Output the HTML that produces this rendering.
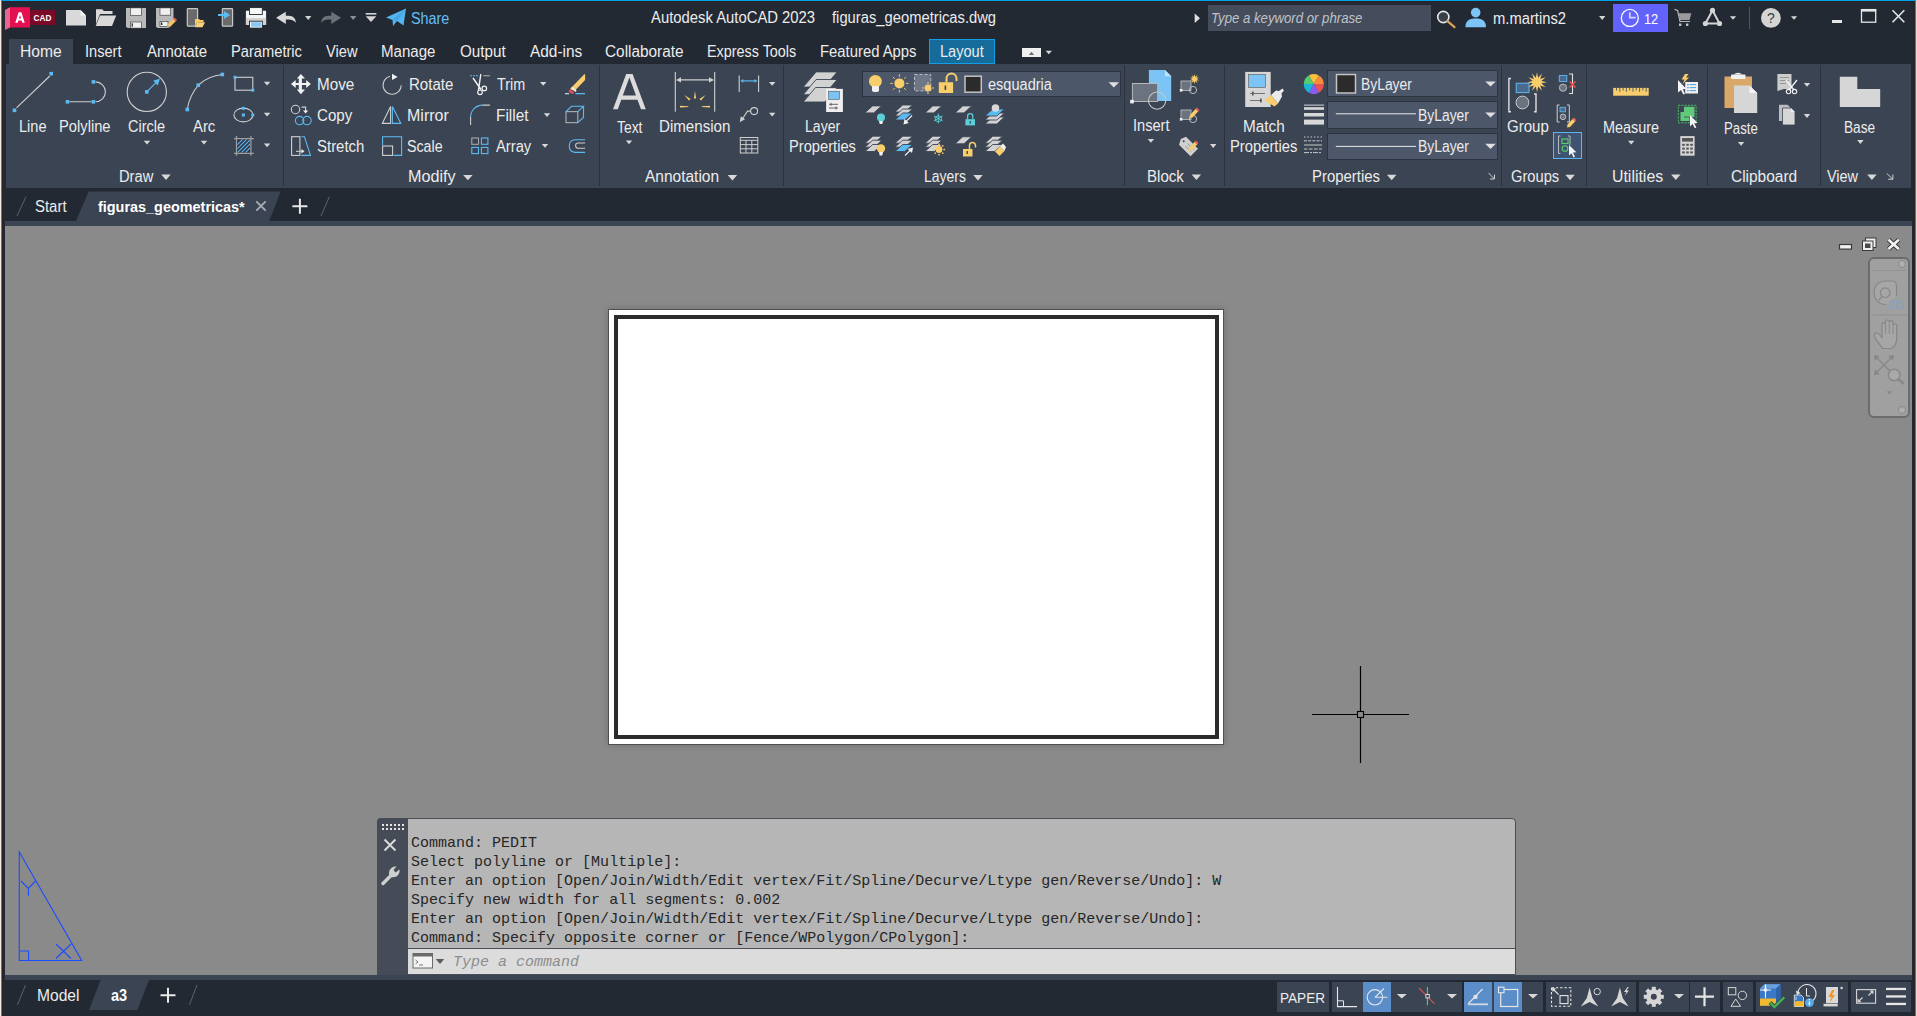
<!DOCTYPE html>
<html><head><meta charset="utf-8"><style>
html,body{margin:0;padding:0;}
body{width:1917px;height:1016px;overflow:hidden;position:relative;background:#222933;font-family:"Liberation Sans",sans-serif;}
body>div,body>svg,body>span{position:absolute;}
.t{white-space:pre;z-index:2;}
</style></head><body>
<div style="left:0px;top:0px;width:1px;height:1016px;background:#f6ece4;"></div>
<div style="left:1916px;top:0px;width:1px;height:1016px;background:#e2d6cf;"></div>
<div style="left:2px;top:1px;width:1px;height:1015px;background:#262429;"></div>
<div style="left:1914px;top:1px;width:1px;height:1015px;background:#262429;"></div>
<div style="left:2px;top:1px;width:1913px;height:1px;background:#262429;"></div>
<div style="left:1px;top:0px;width:1915px;height:1px;background:#00a2ea;"></div>
<div style="left:1px;top:0px;width:1px;height:1016px;background:#0098e0;"></div>
<div style="left:1915px;top:0px;width:1px;height:1016px;background:#0098e0;"></div>
<div style="left:9px;top:39px;width:64px;height:25px;background:#3b4453;"></div>
<div style="left:929px;top:39px;width:66px;height:25px;background:#156b99;box-sizing:border-box;border:1px solid #129ee6;"></div>
<span class="t" style="left:19.92px;top:44.10px;color:#ececec;font-size:16px;line-height:16px;font-family:'Liberation Sans';transform:scaleX(0.9780);transform-origin:0 0;">Home</span>
<span class="t" style="left:85.49px;top:44.10px;color:#ececec;font-size:16px;line-height:16px;font-family:'Liberation Sans';transform:scaleX(0.9128);transform-origin:0 0;">Insert</span>
<span class="t" style="left:146.50px;top:44.10px;color:#ececec;font-size:16px;line-height:16px;font-family:'Liberation Sans';transform:scaleX(0.9391);transform-origin:0 0;">Annotate</span>
<span class="t" style="left:231.08px;top:44.10px;color:#ececec;font-size:16px;line-height:16px;font-family:'Liberation Sans';transform:scaleX(0.9171);transform-origin:0 0;">Parametric</span>
<span class="t" style="left:326.00px;top:44.10px;color:#ececec;font-size:16px;line-height:16px;font-family:'Liberation Sans';transform:scaleX(0.9143);transform-origin:0 0;">View</span>
<span class="t" style="left:381.06px;top:44.10px;color:#ececec;font-size:16px;line-height:16px;font-family:'Liberation Sans';transform:scaleX(0.9421);transform-origin:0 0;">Manage</span>
<span class="t" style="left:460.00px;top:44.10px;color:#ececec;font-size:16px;line-height:16px;font-family:'Liberation Sans';transform:scaleX(0.9500);transform-origin:0 0;">Output</span>
<span class="t" style="left:530.00px;top:44.10px;color:#ececec;font-size:16px;line-height:16px;font-family:'Liberation Sans';transform:scaleX(0.9630);transform-origin:0 0;">Add-ins</span>
<span class="t" style="left:605.04px;top:44.10px;color:#ececec;font-size:16px;line-height:16px;font-family:'Liberation Sans';transform:scaleX(0.9605);transform-origin:0 0;">Collaborate</span>
<span class="t" style="left:707.10px;top:44.10px;color:#ececec;font-size:16px;line-height:16px;font-family:'Liberation Sans';transform:scaleX(0.8980);transform-origin:0 0;">Express Tools</span>
<span class="t" style="left:819.57px;top:44.10px;color:#ececec;font-size:16px;line-height:16px;font-family:'Liberation Sans';transform:scaleX(0.9272);transform-origin:0 0;">Featured Apps</span>
<span class="t" style="left:940.09px;top:44.10px;color:#ececec;font-size:16px;line-height:16px;font-family:'Liberation Sans';transform:scaleX(0.9106);transform-origin:0 0;">Layout</span>
<div style="left:6px;top:64px;width:1905px;height:124px;background:#3b4453;"></div>
<div style="left:283px;top:65px;width:1px;height:121px;background:#2c323d;"></div>
<div style="left:599px;top:65px;width:1px;height:121px;background:#2c323d;"></div>
<div style="left:783px;top:65px;width:1px;height:121px;background:#2c323d;"></div>
<div style="left:1124px;top:65px;width:1px;height:121px;background:#2c323d;"></div>
<div style="left:1224px;top:65px;width:1px;height:121px;background:#2c323d;"></div>
<div style="left:1501px;top:65px;width:1px;height:121px;background:#2c323d;"></div>
<div style="left:1586px;top:65px;width:1px;height:121px;background:#2c323d;"></div>
<div style="left:1707px;top:65px;width:1px;height:121px;background:#2c323d;"></div>
<div style="left:1820px;top:65px;width:1px;height:121px;background:#2c323d;"></div>
<div style="left:5px;top:221px;width:1907px;height:5px;background:#3b4453;"></div>
<svg style="left:70px;top:191px;" width="220" height="31" viewBox="0 0 220 31"><polygon points="6,30 18.7,0.5 210.7,0.5 199.2,30" fill="#3b4453"/></svg>
<span class="t" style="left:35.37px;top:199.00px;color:#ececec;font-size:16px;line-height:16px;font-family:'Liberation Sans';transform:scaleX(0.9333);transform-origin:0 0;">Start</span>
<span class="t" style="left:97.70px;top:199.00px;color:#ffffff;font-size:15.5px;line-height:15.5px;font-family:'Liberation Sans';font-weight:bold;transform:scaleX(0.9304);transform-origin:0 0;">figuras_geometricas*</span>
<div style="left:5px;top:226px;width:1907px;height:749px;background:#8a8a8a;"></div>
<div style="left:5px;top:975px;width:1907px;height:5px;background:#3b4453;"></div>
<svg style="left:85px;top:980px;" width="70" height="30" viewBox="0 0 70 30"><polygon points="4,30 15.6,0 64,0 52.3,30" fill="#3b4453"/></svg>
<span class="t" style="left:37.00px;top:987.80px;color:#ececec;font-size:15.6px;line-height:15.6px;font-family:'Liberation Sans';">Model</span>
<span class="t" style="left:111.20px;top:987.80px;color:#ffffff;font-size:15.6px;line-height:15.6px;font-family:'Liberation Sans';font-weight:bold;transform:scaleX(0.9294);transform-origin:0 0;">a3</span>
<div style="left:608px;top:309px;width:616px;height:436px;background:#ffffff;box-sizing:border-box;border:1px solid #505050;box-shadow:0 0 7px rgba(0,0,0,0.2);"></div>
<div style="left:614px;top:315px;width:605px;height:424px;background:transparent;box-sizing:border-box;border:4px solid #2b2b2b;"></div>
<span class="t" style="left:650.90px;top:9.90px;color:#ececec;font-size:15.8px;line-height:15.8px;font-family:'Liberation Sans';transform:scaleX(0.9391);transform-origin:0 0;">Autodesk AutoCAD 2023</span>
<span class="t" style="left:831.50px;top:9.90px;color:#ececec;font-size:15.8px;line-height:15.8px;font-family:'Liberation Sans';transform:scaleX(0.9343);transform-origin:0 0;">figuras_geometricas.dwg</span>
<span class="t" style="left:18.79px;top:119.00px;color:#ececec;font-size:16px;line-height:16px;font-family:'Liberation Sans';transform:scaleX(0.9103);transform-origin:0 0;">Line</span>
<span class="t" style="left:59.28px;top:119.00px;color:#ececec;font-size:16px;line-height:16px;font-family:'Liberation Sans';transform:scaleX(0.9200);transform-origin:0 0;">Polyline</span>
<span class="t" style="left:128.39px;top:119.00px;color:#ececec;font-size:16px;line-height:16px;font-family:'Liberation Sans';transform:scaleX(0.9075);transform-origin:0 0;">Circle</span>
<span class="t" style="left:193.00px;top:119.00px;color:#ececec;font-size:16px;line-height:16px;font-family:'Liberation Sans';transform:scaleX(0.9292);transform-origin:0 0;">Arc</span>
<span class="t" style="left:119.08px;top:169.00px;color:#ececec;font-size:16px;line-height:16px;font-family:'Liberation Sans';transform:scaleX(0.9189);transform-origin:0 0;">Draw</span>
<span class="t" style="left:316.95px;top:77.00px;color:#ececec;font-size:16px;line-height:16px;font-family:'Liberation Sans';transform:scaleX(0.9526);transform-origin:0 0;">Move</span>
<span class="t" style="left:408.56px;top:77.00px;color:#ececec;font-size:16px;line-height:16px;font-family:'Liberation Sans';transform:scaleX(0.9391);transform-origin:0 0;">Rotate</span>
<span class="t" style="left:496.60px;top:77.00px;color:#ececec;font-size:16px;line-height:16px;font-family:'Liberation Sans';transform:scaleX(0.8968);transform-origin:0 0;">Trim</span>
<span class="t" style="left:317.26px;top:108.10px;color:#ececec;font-size:16px;line-height:16px;font-family:'Liberation Sans';transform:scaleX(0.9444);transform-origin:0 0;">Copy</span>
<span class="t" style="left:407.00px;top:108.10px;color:#ececec;font-size:16px;line-height:16px;font-family:'Liberation Sans';">Mirror</span>
<span class="t" style="left:496.04px;top:108.10px;color:#ececec;font-size:16px;line-height:16px;font-family:'Liberation Sans';transform:scaleX(0.9606);transform-origin:0 0;">Fillet</span>
<span class="t" style="left:317.37px;top:139.00px;color:#ececec;font-size:16px;line-height:16px;font-family:'Liberation Sans';transform:scaleX(0.9347);transform-origin:0 0;">Stretch</span>
<span class="t" style="left:407.11px;top:139.00px;color:#ececec;font-size:16px;line-height:16px;font-family:'Liberation Sans';transform:scaleX(0.8897);transform-origin:0 0;">Scale</span>
<span class="t" style="left:496.00px;top:139.00px;color:#ececec;font-size:16px;line-height:16px;font-family:'Liberation Sans';transform:scaleX(0.9211);transform-origin:0 0;">Array</span>
<span class="t" style="left:408.49px;top:169.00px;color:#ececec;font-size:16px;line-height:16px;font-family:'Liberation Sans';transform:scaleX(1.0109);transform-origin:0 0;">Modify</span>
<span class="t" style="left:617.10px;top:119.60px;color:#ececec;font-size:16px;line-height:16px;font-family:'Liberation Sans';transform:scaleX(0.8667);transform-origin:0 0;">Text</span>
<span class="t" style="left:658.86px;top:119.20px;color:#ececec;font-size:16px;line-height:16px;font-family:'Liberation Sans';transform:scaleX(0.9446);transform-origin:0 0;">Dimension</span>
<span class="t" style="left:645.00px;top:169.00px;color:#ececec;font-size:16px;line-height:16px;font-family:'Liberation Sans';transform:scaleX(0.9684);transform-origin:0 0;">Annotation</span>
<span class="t" style="left:804.92px;top:118.90px;color:#ececec;font-size:16px;line-height:16px;font-family:'Liberation Sans';transform:scaleX(0.8821);transform-origin:0 0;">Layer</span>
<span class="t" style="left:789.08px;top:139.10px;color:#ececec;font-size:16px;line-height:16px;font-family:'Liberation Sans';transform:scaleX(0.9181);transform-origin:0 0;">Properties</span>
<span class="t" style="left:988.10px;top:76.90px;color:#ececec;font-size:15.8px;line-height:15.8px;font-family:'Liberation Sans';transform:scaleX(0.9214);transform-origin:0 0;">esquadria</span>
<span class="t" style="left:924.13px;top:169.00px;color:#ececec;font-size:16px;line-height:16px;font-family:'Liberation Sans';transform:scaleX(0.8723);transform-origin:0 0;">Layers</span>
<span class="t" style="left:1132.79px;top:118.20px;color:#ececec;font-size:16px;line-height:16px;font-family:'Liberation Sans';transform:scaleX(0.9128);transform-origin:0 0;">Insert</span>
<span class="t" style="left:1146.56px;top:169.00px;color:#ececec;font-size:16px;line-height:16px;font-family:'Liberation Sans';transform:scaleX(0.9421);transform-origin:0 0;">Block</span>
<span class="t" style="left:1242.74px;top:118.90px;color:#ececec;font-size:16px;line-height:16px;font-family:'Liberation Sans';transform:scaleX(0.9571);transform-origin:0 0;">Match</span>
<span class="t" style="left:1229.98px;top:139.20px;color:#ececec;font-size:16px;line-height:16px;font-family:'Liberation Sans';transform:scaleX(0.9236);transform-origin:0 0;">Properties</span>
<span class="t" style="left:1361.01px;top:76.90px;color:#ececec;font-size:15.6px;line-height:15.6px;font-family:'Liberation Sans';transform:scaleX(0.8893);transform-origin:0 0;">ByLayer</span>
<span class="t" style="left:1418.01px;top:108.10px;color:#ececec;font-size:15.6px;line-height:15.6px;font-family:'Liberation Sans';transform:scaleX(0.8911);transform-origin:0 0;">ByLayer</span>
<span class="t" style="left:1418.01px;top:139.00px;color:#ececec;font-size:15.6px;line-height:15.6px;font-family:'Liberation Sans';transform:scaleX(0.8911);transform-origin:0 0;">ByLayer</span>
<span class="t" style="left:1312.37px;top:169.00px;color:#ececec;font-size:16px;line-height:16px;font-family:'Liberation Sans';transform:scaleX(0.9319);transform-origin:0 0;">Properties</span>
<span class="t" style="left:1506.56px;top:118.90px;color:#ececec;font-size:16px;line-height:16px;font-family:'Liberation Sans';transform:scaleX(0.9395);transform-origin:0 0;">Group</span>
<span class="t" style="left:1510.88px;top:169.00px;color:#ececec;font-size:16px;line-height:16px;font-family:'Liberation Sans';transform:scaleX(0.9176);transform-origin:0 0;">Groups</span>
<span class="t" style="left:1602.80px;top:119.70px;color:#ececec;font-size:16px;line-height:16px;font-family:'Liberation Sans';transform:scaleX(0.9016);transform-origin:0 0;">Measure</span>
<span class="t" style="left:1612.41px;top:169.00px;color:#ececec;font-size:16px;line-height:16px;font-family:'Liberation Sans';transform:scaleX(0.9920);transform-origin:0 0;">Utilities</span>
<span class="t" style="left:1724.08px;top:120.70px;color:#ececec;font-size:16px;line-height:16px;font-family:'Liberation Sans';transform:scaleX(0.8250);transform-origin:0 0;">Paste</span>
<span class="t" style="left:1730.53px;top:169.00px;color:#ececec;font-size:16px;line-height:16px;font-family:'Liberation Sans';transform:scaleX(0.9657);transform-origin:0 0;">Clipboard</span>
<span class="t" style="left:1843.95px;top:119.80px;color:#ececec;font-size:16px;line-height:16px;font-family:'Liberation Sans';transform:scaleX(0.8543);transform-origin:0 0;">Base</span>
<span class="t" style="left:1827.00px;top:169.00px;color:#ececec;font-size:16px;line-height:16px;font-family:'Liberation Sans';transform:scaleX(0.9029);transform-origin:0 0;">View</span>
<span class="t" style="left:411.10px;top:11.00px;color:#66bff5;font-size:16px;line-height:16px;font-family:'Liberation Sans';transform:scaleX(0.8976);transform-origin:0 0;">Share</span>
<div style="left:1208px;top:5px;width:223px;height:26px;background:#454d5c;"></div>
<span class="t" style="left:1210.97px;top:10.90px;color:#bfc3c9;font-size:14.2px;line-height:14.2px;font-family:'Liberation Sans';font-style:italic;transform:scaleX(0.9290);transform-origin:0 0;">Type a keyword or phrase</span>
<span class="t" style="left:1492.86px;top:11.00px;color:#ececec;font-size:15.8px;line-height:15.8px;font-family:'Liberation Sans';transform:scaleX(0.9351);transform-origin:0 0;">m.martins2</span>
<div style="left:1613px;top:4px;width:55px;height:28px;background:#6262fd;"></div>
<span class="t" style="left:1643.90px;top:11.90px;color:#ffffff;font-size:14.2px;line-height:14.2px;font-family:'Liberation Sans';transform:scaleX(0.9000);transform-origin:0 0;">12</span>
<div style="left:1749px;top:7px;width:1px;height:22px;background:#4a5566;"></div>
<div style="left:1832px;top:20px;width:10px;height:3px;background:#e6e6e6;"></div>
<div style="left:861.5px;top:70.6px;width:259px;height:26.5px;background:#4d576a;box-sizing:border-box;border:1px solid #2d3340;"></div>
<div style="left:1327.3px;top:70px;width:170.3px;height:27.3px;background:#4d576a;box-sizing:border-box;border:1px solid #2d3340;"></div>
<div style="left:1327.3px;top:101.3px;width:170.3px;height:27.3px;background:#4d576a;box-sizing:border-box;border:1px solid #2d3340;"></div>
<div style="left:1327.3px;top:132.6px;width:170.3px;height:27.3px;background:#4d576a;box-sizing:border-box;border:1px solid #2d3340;"></div>
<div style="left:1553px;top:131.9px;width:29px;height:26.7px;background:#3f5470;box-sizing:border-box;border:1.3px solid #5cb6f2;"></div>
<div style="left:1022px;top:48px;width:19px;height:9px;background:#f0f0f0;"></div>
<div style="left:1868px;top:257px;width:41.5px;height:161.2px;background:#a0a0a0;box-sizing:border-box;border:2px solid #6c6c6c;border-radius:6px;"></div>
<div style="left:377px;top:818px;width:1139px;height:157px;background:#b6b6b6;box-sizing:border-box;border:1px solid #4a4f57;border-radius:4px 4px 0 0;"></div>
<div style="left:377px;top:818px;width:31px;height:157px;background:#464c57;border-radius:4px 0 0 0;"></div>
<div style="left:408px;top:948px;width:1107px;height:1px;background:#4a4f57;"></div>
<div style="left:408px;top:949px;width:1107px;height:25px;background:#dcdcdc;"></div>
<span class="t" style="left:411.10px;top:836.00px;color:#262626;font-size:15px;line-height:15px;font-family:'Liberation Mono';">Command: PEDIT</span>
<span class="t" style="left:411.10px;top:855.00px;color:#262626;font-size:15px;line-height:15px;font-family:'Liberation Mono';">Select polyline or [Multiple]:</span>
<span class="t" style="left:411.10px;top:874.00px;color:#262626;font-size:15px;line-height:15px;font-family:'Liberation Mono';">Enter an option [Open/Join/Width/Edit vertex/Fit/Spline/Decurve/Ltype gen/Reverse/Undo]: W</span>
<span class="t" style="left:411.10px;top:893.00px;color:#262626;font-size:15px;line-height:15px;font-family:'Liberation Mono';">Specify new width for all segments: 0.002</span>
<span class="t" style="left:411.10px;top:912.00px;color:#262626;font-size:15px;line-height:15px;font-family:'Liberation Mono';">Enter an option [Open/Join/Width/Edit vertex/Fit/Spline/Decurve/Ltype gen/Reverse/Undo]:</span>
<span class="t" style="left:411.10px;top:931.00px;color:#262626;font-size:15px;line-height:15px;font-family:'Liberation Mono';">Command: Specify opposite corner or [Fence/WPolygon/CPolygon]:</span>
<span class="t" style="left:453.00px;top:955.00px;color:#8c8c8c;font-size:15px;line-height:15px;font-family:'Liberation Mono';font-style:italic;">Type a command</span>
<div style="left:1277px;top:982px;width:52px;height:29.6px;background:#3b4453;"></div>
<span class="t" style="left:1280.32px;top:989.70px;color:#ececec;font-size:15.5px;line-height:15.5px;font-family:'Liberation Sans';transform:scaleX(0.8760);transform-origin:0 0;">PAPER</span>
<div style="left:1332px;top:982px;width:130px;height:29.6px;background:#3b4453;"></div>
<div style="left:1363px;top:982px;width:28px;height:29.6px;background:#5b8ec9;"></div>
<div style="left:1464px;top:982px;width:79px;height:29.6px;background:#3b4453;"></div>
<div style="left:1463.6px;top:982px;width:28.1px;height:29.6px;background:#5b8ec9;"></div>
<div style="left:1493.7px;top:982px;width:28.1px;height:29.6px;background:#5b8ec9;"></div>
<div style="left:1546px;top:982px;width:90px;height:29.6px;background:#3b4453;"></div>
<div style="left:1639px;top:982px;width:50px;height:29.6px;background:#3b4453;"></div>
<div style="left:1690px;top:982px;width:30px;height:29.6px;background:#3b4453;"></div>
<div style="left:1723px;top:982px;width:30px;height:29.6px;background:#3b4453;"></div>
<div style="left:1756px;top:982px;width:92px;height:29.6px;background:#3b4453;"></div>
<div style="left:1851px;top:982px;width:60px;height:29.6px;background:#3b4453;"></div>
<svg style="left:0;top:0" width="1917" height="1016" viewBox="0 0 1917 1016"><polygon points="5,10 10,7.2 10,27.5 5,30" fill="#e9658e"/>
<rect x="10" y="7.2" width="20" height="20.3" fill="#e5104f"/>
<rect x="30" y="9.9" width="25" height="15.1" fill="#7b0a29"/>
<path d="M15.3,22.8 L18.6,12.2 H21.4 L24.7,22.8 H22.3 L21.6,20.5 H18.4 L17.7,22.8 Z M19,18.6 H21 L20,15 Z" fill="#fff"/>
<text x="33.6" y="20.9" font-family="Liberation Sans" font-weight="bold" font-size="9.6" fill="#fff" textLength="17.8" lengthAdjust="spacingAndGlyphs">CAD</text>
<path d="M66,10 H80.5 L86,15.5 V25.4 H66 Z" fill="#d9d9d9"/><path d="M80.5,10 V15.5 H86 Z" fill="#f4f4f4"/>
<path d="M96,9.2 H102 L104,11 H112.5 V14 H100 L96,24 Z" fill="#d9d9d9"/><path d="M100,15.4 H116.2 L112,26 H95.7 Z" fill="#d9d9d9"/>
<path d="M126,7.9 H146 V28.1 H127.5 L126,26.6 Z" fill="#b9b9b9"/><rect x="130.3" y="7.9" width="11" height="7.7" fill="#f0f0f0" stroke="#333" stroke-width="0.6"/><rect x="130.3" y="22" width="11" height="6.1" fill="#f0f0f0" stroke="#333" stroke-width="0.6"/><rect x="131.6" y="23.2" width="1.3" height="3.5" fill="#333"/>
<path d="M156,7.9 H173.5 V20 L167,28 H157.5 L156,26.6 Z" fill="#b9b9b9"/><rect x="160" y="7.9" width="10.7" height="7.3" fill="#f0f0f0" stroke="#333" stroke-width="0.6"/><rect x="160" y="21.5" width="8" height="5" fill="#f0f0f0" stroke="#333" stroke-width="0.6"/><rect x="161" y="22.5" width="1.3" height="2.5" fill="#222"/>
<path d="M166.5,28 L167.5,24.5 L174,18 L176.5,20.5 L170,27 Z" fill="#f2c462"/><path d="M173,19 L174.5,17.5 L177,20 L175.5,21.5 Z" fill="#e85a5a"/><path d="M166.5,28 L167.5,24.5 L170,27 Z" fill="#aaa"/>
<rect x="187.3" y="8.6" width="10.3" height="17.6" rx="0.8" fill="#6a6a6a" stroke="#c8c8c8" stroke-width="1.2"/><path d="M195,19 H199 L200,20 H203.5 V22 H197.5 L195,26.5 Z" fill="#f5c966"/><path d="M197.6,22.2 H205 L202.5,27.2 H195 Z" fill="#f7d27a"/>
<rect x="222.3" y="8.6" width="10.3" height="17.6" rx="0.8" fill="#6a6a6a" stroke="#c8c8c8" stroke-width="1.2"/><path d="M218,14 H224 V10.9 L230.2,15 L224,19 V16 H218 Z" fill="#5bbcf5"/>
<rect x="245.9" y="10.7" width="20.2" height="14.1" fill="#f4f4f4"/><rect x="245.9" y="18.1" width="20.2" height="6.7" fill="#d2d2d2"/><rect x="249.5" y="7.6" width="12.8" height="6.9" fill="#f8f8f8" stroke="#222933" stroke-width="0.9"/><rect x="249.5" y="21.2" width="12.8" height="6.9" fill="#f8f8f8" stroke="#222933" stroke-width="0.9"/><rect x="251.1" y="22.2" width="9.8" height="4.5" fill="#86c8f7"/>
<path d="M276.1,17.8 L285.8,11.8 V15.7 H288.5 C293,15.7 296,18.5 295.8,22.8 C294,20.5 291.5,19.6 288.5,19.6 H285.8 V24 Z" fill="#d8d8d8"/>
<path d="M305,16 H311.4 L308.2,20 Z" fill="#d4d4d4"/>
<path d="M341,17.8 L331.3,11.8 V15.7 H328.6 C324.1,15.7 321.1,18.5 321.3,22.8 C323.1,20.5 325.6,19.6 328.6,19.6 H331.3 V24 Z" fill="#6b7079"/>
<path d="M350,16 H356.4 L353.2,20 Z" fill="#8a8e95"/>
<rect x="365.7" y="13" width="10.7" height="1.6" fill="#d4d4d4"/><path d="M365.7,16.2 H376.4 L371,22 Z" fill="#d4d4d4"/>
<path d="M386,17.5 L406,8.6 L403.5,25.5 L397,21 L393,26 L392.5,20 Z" fill="#54b4ef"/><path d="M392.5,20 L406,8.6 L397,21 Z" fill="#48a4e0"/>
<path d="M1194.7,13.4 L1200,18.2 L1194.7,23 Z" fill="#e0e0e0"/>
<circle cx="1443.3" cy="17" r="5.6" fill="#3a3f48" stroke="#e6e6e6" stroke-width="1.6"/><path d="M1447.5,21.2 L1454.5,27.2" stroke="#d9a55a" stroke-width="2.2" stroke-linecap="round"/>
<circle cx="1475.7" cy="12.6" r="4.8" fill="#7cc4f5"/><path d="M1465.4,27.2 C1465.4,21 1469,18.6 1475.7,18.6 C1482.4,18.6 1486,21 1486,27.2 Z" fill="#7cc4f5"/>
<path d="M1599,16 H1605.4 L1602.2,20 Z" fill="#d4d4d4"/>
<circle cx="1629.8" cy="17.9" r="8.5" fill="none" stroke="#f4f4ff" stroke-width="1.4"/><path d="M1629.8,12.2 V17.6 H1635.8" fill="none" stroke="#d4d4fb" stroke-width="1.8"/>
<path d="M1674.6,9.4 L1677.6,10.5 L1680,21.5 H1690" fill="none" stroke="#b8b8b8" stroke-width="1.2"/><path d="M1678.5,13.3 H1691.3 L1689.6,20 H1680 Z" fill="#9a9a9a"/><rect x="1679" y="23.5" width="2.4" height="2.4" fill="#c8c8c8"/><rect x="1686" y="23.5" width="2.4" height="2.4" fill="#c8c8c8"/>
<path d="M1712.5,10.4 L1705.4,23.5 H1719.5 Z" fill="none" stroke="#d4d4d4" stroke-width="2"/><circle cx="1712.5" cy="10.4" r="2.6" fill="#d4d4d4"/><circle cx="1705.4" cy="23.5" r="2.6" fill="#d4d4d4"/><circle cx="1719.5" cy="23.5" r="2.6" fill="#d4d4d4"/>
<path d="M1729.9,16.2 H1736.2 L1733,19.8 Z" fill="#d4d4d4"/>
<circle cx="1770.9" cy="17.9" r="9.9" fill="#d4d4d4"/><text x="1767" y="23" font-family="Liberation Sans" font-size="14" fill="#3c3c3c">?</text>
<path d="M1790.9,16.2 H1797.2 L1794,19.8 Z" fill="#d4d4d4"/>
<rect x="1861.5" y="9.6" width="14.2" height="12.6" fill="none" stroke="#e6e6e6" stroke-width="1.3"/><rect x="1861" y="9" width="15.2" height="2.6" fill="#e6e6e6"/>
<path d="M1892.5,10.3 L1904.3,22.3 M1904.3,10.3 L1892.5,22.3" stroke="#e6e6e6" stroke-width="1.6"/>
<path d="M16.5,107.8 L49.8,76" stroke="#cfcfcf" stroke-width="1.1"/><rect x="12.70" y="108.50" width="3.6" height="3.6" fill="#5cbaf2"/><rect x="49.40" y="71.90" width="3.6" height="3.6" fill="#5cbaf2"/>
<path d="M69.5,101.8 H91.5 M95.5,81.9 A9.9,9.9 0 0 1 95.5,101.7" fill="none" stroke="#cfcfcf" stroke-width="1.1"/><rect x="65.70" y="100.00" width="3.6" height="3.6" fill="#5cbaf2"/><rect x="91.60" y="100.00" width="3.6" height="3.6" fill="#5cbaf2"/><rect x="91.60" y="80.10" width="3.6" height="3.6" fill="#5cbaf2"/>
<circle cx="146.8" cy="91.9" r="19.6" fill="none" stroke="#cfcfcf" stroke-width="1.1"/><path d="M146.8,91.9 L157.5,81.2" stroke="#5cbaf2" stroke-width="1.2"/><path d="M160,78.6 L153.2,80.8 L157.8,85.4 Z" fill="#5cbaf2"/><rect x="145.00" y="90.10" width="3.6" height="3.6" fill="#5cbaf2"/>
<path d="M143.80,140.70 H150.20 L147.00,144.50 Z" fill="#d8d8d8"/>
<path d="M187.3,109.5 C189,97 195,89 199,84.5 C205,79 213,75.5 222.3,74.5" fill="none" stroke="#cfcfcf" stroke-width="1.1"/><rect x="185.50" y="107.70" width="3.6" height="3.6" fill="#5cbaf2"/><rect x="196.40" y="83.40" width="3.6" height="3.6" fill="#5cbaf2"/><rect x="220.50" y="72.70" width="3.6" height="3.6" fill="#5cbaf2"/>
<path d="M200.80,140.70 H207.20 L204.00,144.50 Z" fill="#d8d8d8"/>
<rect x="235" y="77.3" width="17.8" height="12.9" fill="none" stroke="#cfcfcf" stroke-width="1.1"/><rect x="233.50" y="75.80" width="3" height="3" fill="#5cbaf2"/><rect x="251.30" y="88.70" width="3" height="3" fill="#5cbaf2"/>
<path d="M263.90,81.70 H270.30 L267.10,85.50 Z" fill="#d8d8d8"/>
<ellipse cx="243.4" cy="115" rx="9.5" ry="6.9" fill="none" stroke="#cfcfcf" stroke-width="1.1"/><rect x="241.90" y="113.50" width="3" height="3" fill="#5cbaf2"/><rect x="241.90" y="106.80" width="3" height="3" fill="#5cbaf2"/><rect x="251.30" y="113.50" width="3" height="3" fill="#5cbaf2"/>
<path d="M263.90,112.70 H270.30 L267.10,116.50 Z" fill="#d8d8d8"/>
<rect x="236.5" y="138.6" width="14.4" height="14.8" fill="#30374a"/><defs><clipPath id="hc"><rect x="237.3" y="139.4" width="12.8" height="13.2"/></clipPath></defs><g clip-path="url(#hc)" stroke="#5cbaf2" stroke-width="1.1"><path d="M230,160 L252,138 M234,160 L256,138 M238,160 L260,138 M226,160 L248,138 M222,160 L244,138"/></g><path d="M236.5,136.1 V155.7 M250.9,136.1 V155.7 M234.1,138.6 H253.8 M234.1,153.4 H253.8" stroke="#a0a0a0" stroke-width="1.2"/>
<path d="M263.90,143.50 H270.30 L267.10,147.30 Z" fill="#d8d8d8"/>
<path d="M161.25,174.60 H170.75 L166.00,180.00 Z" fill="#d8d8d8"/>
<path d="M299.9,78 V90 M295,84 H307" stroke="#f2f2f2" stroke-width="2.2"/><path d="M300.9,73.9 L296.8,78.6 H305 Z M300.9,94.3 L296.8,89.6 H305 Z M291,84 L295.7,79.9 V88.1 Z M310.9,84 L306.2,79.9 V88.1 Z" fill="#f2f2f2"/><path d="M300.9,78 V90 M295,84 H307" stroke="#f2f2f2" stroke-width="2"/>
<path d="M390,76.3 A9.1,9.1 0 1 0 401.2,85.2" fill="none" stroke="#cfcfcf" stroke-width="1.1"/><path d="M392,73.8 L397.6,77 L392,80 Z" fill="#f2f2f2"/>
<circle cx="295.5" cy="109.5" r="4.2" fill="none" stroke="#cfcfcf" stroke-width="1.1"/><path d="M301.5,107.2 H305.6 V111" fill="none" stroke="#cfcfcf" stroke-width="1.2"/><path d="M303,110.5 H308.2 L305.6,113.5 Z" fill="#f2f2f2"/><circle cx="299.6" cy="120.6" r="4.2" fill="none" stroke="#5cbaf2" stroke-width="1.1"/><circle cx="307" cy="120.6" r="4.2" fill="none" stroke="#5cbaf2" stroke-width="1.1"/>
<path d="M382.3,123.4 L390.6,106.6 V123.4 Z" fill="none" stroke="#cfcfcf" stroke-width="1.1"/><path d="M392.4,106.6 V123.4 H400.8 Z" fill="none" stroke="#5cbaf2" stroke-width="1.1"/>
<rect x="291.6" y="136.7" width="8.3" height="18.7" fill="none" stroke="#cfcfcf" stroke-width="1.1"/><path d="M301.3,136.7 H304.4 L310.5,155.4 H301.3" fill="none" stroke="#5cbaf2" stroke-width="1.1"/><path d="M296,151.3 H302" stroke="#cfcfcf" stroke-width="1.1"/><path d="M301.5,149 L304.5,151.3 L301.5,153.6 Z" fill="#f2f2f2"/>
<path d="M382.6,145 V136.7 H401.6 V155.4 H393.5" fill="none" stroke="#5cbaf2" stroke-width="1.1"/><rect x="382.6" y="146" width="10" height="9.4" fill="none" stroke="#cfcfcf" stroke-width="1.1"/>
<path d="M470,75.7 H478.7" stroke="#5cbaf2" stroke-width="1.1" stroke-dasharray="2,1"/><path d="M483.3,75.7 H489.9" stroke="#a8a8a8" stroke-width="1.1"/><path d="M473,78 L481,89.5 M480.8,74.2 L478.5,90" stroke="#f2f2f2" stroke-width="1.4"/><circle cx="480" cy="92.3" r="2.3" fill="none" stroke="#f2f2f2" stroke-width="1.2"/><circle cx="484.3" cy="88.4" r="2.3" fill="none" stroke="#f2f2f2" stroke-width="1.2"/>
<path d="M540.00,81.90 H546.40 L543.20,85.70 Z" fill="#d8d8d8"/>
<path d="M570,89 L584,74.5 L585.1,73.9 V80 L574.5,91 Z" fill="#f8cd6c"/><path d="M570,89 L574.5,93 L572,94 L568.5,91.5 Z" fill="#ea4f5a"/><path d="M571,88 L575.5,92 L576.7,90.8 L572.2,86.8 Z" fill="#f0f0f0"/><path d="M565,93.6 H569 M575.5,93.6 H585" stroke="#5cbaf2" stroke-width="1.1"/><path d="M565,93.6 H569" stroke="#cfcfcf" stroke-width="1.1"/>
<path d="M470.6,117 A12,12 0 0 1 482.4,105.1" fill="none" stroke="#5cbaf2" stroke-width="1.1"/><path d="M482.4,105.1 H489.9 M470.6,117 V125" stroke="#cfcfcf" stroke-width="1.1"/>
<path d="M543.80,113.20 H550.20 L547.00,117.00 Z" fill="#d8d8d8"/>
<rect x="566" y="111.6" width="11.8" height="11" fill="none" stroke="#a8a8a8" stroke-width="1.2"/><path d="M566,111.6 L571.5,106.3 H583.5 L577.8,111.6 M583.5,106.3 V117.5 L577.8,122.6" fill="none" stroke="#5cbaf2" stroke-width="1.1"/>
<rect x="471.8" y="138" width="6.7" height="6.3" fill="none" stroke="#a8a8a8" stroke-width="1.1"/><rect x="481.4" y="138" width="6.5" height="6.3" fill="none" stroke="#5cbaf2" stroke-width="1.1"/><rect x="471.8" y="147.4" width="6.7" height="6.2" fill="none" stroke="#5cbaf2" stroke-width="1.1"/><rect x="481.4" y="147.4" width="6.5" height="6.2" fill="none" stroke="#5cbaf2" stroke-width="1.1"/>
<path d="M541.80,144.00 H548.20 L545.00,147.80 Z" fill="#d8d8d8"/>
<path d="M585.1,139.8 H574.5 A6.4,6.4 0 0 0 574.5,152.4 H585.1" fill="none" stroke="#5cbaf2" stroke-width="1.1"/><path d="M585.1,143 H577.5 A2.7,2.7 0 0 0 577.5,148.2 H585.1" fill="none" stroke="#cfcfcf" stroke-width="1.1"/>
<path d="M463.15,174.90 H472.65 L467.90,180.30 Z" fill="#d8d8d8"/>
<path d="M613,109.3 L626.2,73.9 H632.6 L645.8,109.3 H641 L637.5,99.7 H621.3 L617.8,109.3 Z M622.8,95.5 H636 L629.4,77.5 Z" fill="#dcdcdc"/>
<path d="M625.80,140.40 H632.20 L629.00,144.20 Z" fill="#d8d8d8"/>
<path d="M675.3,72 V111.8 M714.7,72 V111.8 M679,79.9 H711" stroke="#cfcfcf" stroke-width="1.1"/><path d="M676,79.9 L681,77.2 V82.6 Z M714,79.9 L709,77.2 V82.6 Z" fill="#cfcfcf"/>
<g fill="#f8cd6c"><path d="M693.9,98.6 L695,91 L696.1,98.6 Z"/><path d="M688.9,100.6 L684.4,95 L690.6,99 Z"/><path d="M701.1,100.6 L705.6,95 L699.4,99 Z"/><path d="M688.3,106.3 L680,105.8 V107.4 L688.3,107 Z"/><path d="M701.7,106.3 L710,105.8 V107.4 L701.7,107 Z"/></g>
<path d="M739.2,75.4 V92 M758.6,75.4 V92" stroke="#cfcfcf" stroke-width="1.1"/><path d="M742,80.9 H756" stroke="#5cbaf2" stroke-width="1.2"/><path d="M740.3,80.9 L743.3,79 V82.8 Z M757.5,80.9 L754.5,79 V82.8 Z" fill="#5cbaf2"/>
<path d="M769.00,81.90 H775.40 L772.20,85.70 Z" fill="#d8d8d8"/>
<circle cx="754.1" cy="111.1" r="3.5" fill="none" stroke="#cfcfcf" stroke-width="1.1"/><path d="M750.6,111.1 H747.5 L742,119.5" fill="none" stroke="#cfcfcf" stroke-width="1.1"/><path d="M739.7,122.3 L740.8,116.2 L745,119.3 Z" fill="#cfcfcf"/>
<path d="M769.00,112.70 H775.40 L772.20,116.50 Z" fill="#d8d8d8"/>
<rect x="740.3" y="137.5" width="17.5" height="15.5" fill="none" stroke="#cfcfcf" stroke-width="1"/><path d="M740.3,140.3 H757.8 M740.3,144.6 H757.8 M740.3,148.8 H757.8 M746,140.3 V153 M751.8,140.3 V153" stroke="#cfcfcf" stroke-width="1"/>
<path d="M727.65,175.10 H737.15 L732.40,180.50 Z" fill="#d8d8d8"/>
<path d="M803.20,87.10 L816.12,71.90 H837.20 L824.28,87.10 Z" fill="#d2d2d2" stroke="#3b4453" stroke-width="0.9"/><path d="M803.20,94.70 L816.12,79.50 H837.20 L824.28,94.70 Z" fill="#d2d2d2" stroke="#3b4453" stroke-width="0.9"/><path d="M803.20,102.00 L815.53,87.50 H837.20 L824.88,102.00 Z" fill="#d2d2d2" stroke="#3b4453" stroke-width="0.9"/>
<rect x="826.1" y="88.9" width="16.8" height="23.1" fill="#efefef"/><rect x="828.4" y="91.2" width="11.2" height="8.3" fill="#7cc4f5" stroke="#444" stroke-width="0.5"/><path d="M829,104.3 H838 M829,108 H838" stroke="#555" stroke-width="0.9"/><path d="M831,102.8 V105.8 M836,106.5 V109.5" stroke="#555" stroke-width="0.9"/>
<circle cx="875.4" cy="81.3" r="6.4" fill="#f8cd6c"/><path d="M872,86 H879 V90.5 C879,92.5 872,92.5 872,90.5 Z" fill="#f0f0f0"/>
<circle cx="899.4" cy="83.4" r="5" fill="#f8cd6c"/><g stroke="#f8cd6c" stroke-width="1"><path d="M899.4,74.3 V76.8 M899.4,90 V92.5 M890.3,83.4 H892.8 M906,83.4 H908.5 M893,77 L894.7,78.7 M904.1,88.1 L905.8,89.8 M905.8,77 L904.1,78.7 M894.7,88.1 L893,89.8"/></g>
<rect x="914.5" y="74.5" width="16.3" height="16.4" fill="#6e7787" stroke="#b8bcc4" stroke-width="1" stroke-dasharray="3,2"/><circle cx="928" cy="88" r="3.4" fill="#f8cd6c"/><g fill="#f8cd6c"><rect x="927.3" y="82.2" width="1.4" height="1.4"/><rect x="927.3" y="92.4" width="1.4" height="1.4"/><rect x="922.3" y="87.3" width="1.4" height="1.4"/><rect x="932.4" y="87.3" width="1.4" height="1.4"/></g>
<rect x="938.8" y="82.2" width="14.3" height="10.8" fill="#f8cd6c"/><path d="M946.5,82.2 V78.5 A5,5 0 0 1 956.5,78.5 V81" fill="none" stroke="#f8cd6c" stroke-width="2"/><rect x="944.6" y="85.5" width="1.6" height="4.5" fill="#3b4453"/>
<rect x="965" y="76.2" width="16.3" height="16" fill="#2b2b2b" stroke="#c4c4c4" stroke-width="1.5"/>
<path d="M1108.55,82.20 H1119.05 L1113.80,87.40 Z" fill="#e0e0e0"/>
<path d="M864.80,112.90 L872.50,105.90 H881.50 L873.80,112.90 Z" fill="#d2d2d2" stroke="#3b4453" stroke-width="0.9"/><circle cx="881" cy="117.6" r="4" fill="#5ccfd8"/><path d="M879,121 H883 L882.3,124 H879.7 Z" fill="#f0f0f0"/>
<path d="M895.00,112.00 L902.70,105.00 H912.50 L904.80,112.00 Z" fill="#d2d2d2" stroke="#3b4453" stroke-width="0.9"/><path d="M895.00,116.00 L902.70,109.00 H912.50 L904.80,116.00 Z" fill="#d2d2d2" stroke="#3b4453" stroke-width="0.9"/><path d="M895.00,120.00 L902.70,113.00 H912.50 L904.80,120.00 Z" fill="#5cbaf2" stroke="#3b4453" stroke-width="0.9"/><path d="M912,115.5 L905.5,122" stroke="#f2f2f2" stroke-width="1.1"/><path d="M903.5,124.5 L904.5,119 L908.8,123 Z" fill="#f2f2f2"/>
<path d="M925.00,112.90 L932.70,105.90 H941.70 L934.00,112.90 Z" fill="#d2d2d2" stroke="#3b4453" stroke-width="0.9"/><g stroke="#5ccfd8" stroke-width="0.9" fill="none"><path d="M938.3,113.5 V123.5 M934,116 L942.6,121 M942.6,116 L934,121"/><polygon points="938.3,115.5 941.3,117.2 941.3,120.4 938.3,122 935.3,120.4 935.3,117.2"/></g>
<path d="M955.00,112.90 L962.70,105.90 H971.70 L964.00,112.90 Z" fill="#d2d2d2" stroke="#3b4453" stroke-width="0.9"/><rect x="965.4" y="119.2" width="9.6" height="6.2" fill="#5ccfd8"/><path d="M967.6,119.2 V116.3 A2.6,2.6 0 0 1 972.8,116.3 V119.2" fill="none" stroke="#5ccfd8" stroke-width="1.3"/><rect x="969.6" y="121" width="1.2" height="2.6" fill="#3b4453"/>
<path d="M985.00,124.00 L992.70,117.00 H1004.50 L996.80,124.00 Z" fill="#d2d2d2" stroke="#3b4453" stroke-width="0.9"/><path d="M985.00,120.00 L992.70,113.00 H1004.50 L996.80,120.00 Z" fill="#d2d2d2" stroke="#3b4453" stroke-width="0.9"/><path d="M985.00,116.00 L992.70,109.00 H1004.50 L996.80,116.00 Z" fill="#5cbaf2" stroke="#3b4453" stroke-width="0.9"/><circle cx="995.5" cy="108" r="3.8" fill="#d8d8d8"/>
<path d="M865.00,143.20 L872.70,136.20 H882.00 L874.30,143.20 Z" fill="#d2d2d2" stroke="#3b4453" stroke-width="0.9"/><path d="M865.00,147.20 L872.70,140.20 H882.00 L874.30,147.20 Z" fill="#d2d2d2" stroke="#3b4453" stroke-width="0.9"/><path d="M865.00,151.50 L872.70,144.50 H882.00 L874.30,151.50 Z" fill="#d2d2d2" stroke="#3b4453" stroke-width="0.9"/><circle cx="881" cy="148.5" r="4.2" fill="#f8cd6c"/><path d="M879,152 H883 L882.3,155.5 H879.7 Z" fill="#f0f0f0"/>
<path d="M895.00,143.20 L902.70,136.20 H912.50 L904.80,143.20 Z" fill="#d2d2d2" stroke="#3b4453" stroke-width="0.9"/><path d="M895.00,147.20 L902.70,140.20 H912.50 L904.80,147.20 Z" fill="#d2d2d2" stroke="#3b4453" stroke-width="0.9"/><path d="M895.00,151.50 L902.70,144.50 H912.50 L904.80,151.50 Z" fill="#5cbaf2" stroke="#3b4453" stroke-width="0.9"/><path d="M905,155.5 L910.5,150" stroke="#f2f2f2" stroke-width="1.1"/><path d="M913,147.5 L912,153 L907.7,149 Z" fill="#f2f2f2"/>
<path d="M925.00,143.20 L932.70,136.20 H942.00 L934.30,143.20 Z" fill="#d2d2d2" stroke="#3b4453" stroke-width="0.9"/><path d="M925.00,147.20 L932.70,140.20 H942.00 L934.30,147.20 Z" fill="#d2d2d2" stroke="#3b4453" stroke-width="0.9"/><path d="M925.00,151.50 L932.70,144.50 H942.00 L934.30,151.50 Z" fill="#d2d2d2" stroke="#3b4453" stroke-width="0.9"/><circle cx="939" cy="149.5" r="3.4" fill="#f8cd6c"/><g fill="#f8cd6c"><rect x="943.45" y="148.75" width="1.5" height="1.5"/><rect x="941.93" y="152.43" width="1.5" height="1.5"/><rect x="938.25" y="153.95" width="1.5" height="1.5"/><rect x="934.57" y="152.43" width="1.5" height="1.5"/><rect x="933.05" y="148.75" width="1.5" height="1.5"/><rect x="934.57" y="145.07" width="1.5" height="1.5"/><rect x="938.25" y="143.55" width="1.5" height="1.5"/><rect x="941.93" y="145.07" width="1.5" height="1.5"/></g>
<path d="M955.00,143.80 L962.70,136.80 H971.70 L964.00,143.80 Z" fill="#d2d2d2" stroke="#3b4453" stroke-width="0.9"/><rect x="963" y="149" width="9.5" height="7.5" fill="#f8cd6c"/><path d="M969.5,149 V145.5 A3,3 0 0 1 975.5,145.5 V147.5" fill="none" stroke="#f8cd6c" stroke-width="1.5"/><rect x="966.5" y="151" width="1.4" height="3" fill="#3b4453"/>
<path d="M985.00,143.20 L992.70,136.20 H1002.50 L994.80,143.20 Z" fill="#d2d2d2" stroke="#3b4453" stroke-width="0.9"/><path d="M985.00,147.20 L992.70,140.20 H1002.50 L994.80,147.20 Z" fill="#d2d2d2" stroke="#3b4453" stroke-width="0.9"/><path d="M985.00,151.50 L992.70,144.50 H1002.50 L994.80,151.50 Z" fill="#d2d2d2" stroke="#3b4453" stroke-width="0.9"/><path d="M995,151.5 L1000,146.5 L1004.5,151 L999.5,156 Z" fill="#f8cd6c"/><path d="M1000,146.5 L1003,143.5 L1006,147 L1004.5,151 Z" fill="#f0f0f0"/>
<path d="M973.25,175.10 H982.75 L978.00,180.50 Z" fill="#d8d8d8"/>
<path d="M1148.9,70 H1165 L1171.2,76.2 V100.9 H1148.9 Z" fill="#7cc4f5"/><path d="M1165,70 V76.2 H1171.2 Z" fill="#bfe3fb"/>
<rect x="1132.4" y="83.5" width="25.3" height="18" fill="#6b7280" stroke="#b8b8b8" stroke-width="1"/><circle cx="1157.1" cy="100.6" r="8.6" fill="none" stroke="#c8c8c8" stroke-width="1.1"/><rect x="1130.2" y="99.8" width="3.6" height="3.6" fill="#f0f0f0"/>
<path d="M1147.70,138.90 H1154.10 L1150.90,142.70 Z" fill="#d8d8d8"/>
<rect x="1181" y="81" width="10" height="9.5" fill="#6b7280" stroke="#b8b8b8" stroke-width="0.9"/><circle cx="1193" cy="90" r="3.6" fill="none" stroke="#c8c8c8" stroke-width="0.9"/><rect x="1179.8" y="89" width="2.6" height="2.6" fill="#f0f0f0"/><polygon points="1194.50,74.00 1195.21,76.81 1197.44,74.95 1196.36,77.65 1199.26,77.45 1196.80,79.00 1199.26,80.55 1196.36,80.35 1197.44,83.05 1195.21,81.19 1194.50,84.00 1193.79,81.19 1191.56,83.05 1192.64,80.35 1189.74,80.55 1192.20,79.00 1189.74,77.45 1192.64,77.65 1191.56,74.95 1193.79,76.81" fill="#f8cd6c"/>
<rect x="1181" y="110" width="10" height="9.5" fill="#6b7280" stroke="#b8b8b8" stroke-width="0.9"/><circle cx="1193" cy="119" r="3.6" fill="none" stroke="#c8c8c8" stroke-width="0.9"/><rect x="1179.8" y="118" width="2.6" height="2.6" fill="#f0f0f0"/><path d="M1190,115 L1196,108.5 L1198.5,111 L1192.5,117.5 L1189.5,118 Z" fill="#f8cd6c"/><path d="M1195.5,109 L1197,107.5 L1199.5,110 L1198,111.5 Z" fill="#e85a5a"/>
<path d="M1180.8,139 L1186,136.8 L1198,148.8 L1190.5,156.3 L1179,144.8 Z" fill="#d0d0d0"/><circle cx="1183.7" cy="141.3" r="1" fill="#3b4453"/><path d="M1185.5,146 L1191,151.5 M1187.5,143.5 L1193.5,149.5" stroke="#888" stroke-width="0.8"/><path d="M1189,148 L1195,141.5 L1197.5,144 L1191.5,150.5 L1188.5,151 Z" fill="#f8cd6c"/><path d="M1194.5,142 L1196,140.5 L1198.5,143 L1197,144.5 Z" fill="#e85a5a"/>
<path d="M1210.00,144.10 H1216.40 L1213.20,147.90 Z" fill="#d8d8d8"/>
<path d="M1191.65,174.60 H1201.15 L1196.40,180.00 Z" fill="#d8d8d8"/>
<rect x="1245.2" y="71.9" width="25.5" height="35.1" fill="#d6d6d6"/><rect x="1248.6" y="74.5" width="16.8" height="12.8" fill="#7cc4f5" stroke="#555" stroke-width="0.6"/><path d="M1250,93.5 H1265 M1250,100.5 H1262" stroke="#666" stroke-width="0.9"/><rect x="1252" y="91.5" width="1.6" height="4" fill="#555"/><rect x="1260" y="98.5" width="1.6" height="4" fill="#555"/>
<path d="M1264.5,100.5 L1271,95 L1278,103.5 L1274.5,106.5 Z" fill="#f8cd6c"/><path d="M1271,95 L1276,90.5 L1279,91 L1282.5,88.5 L1284,90.5 L1281.5,93.5 L1282,96.5 L1278,103.5 Z" fill="#eaeaea"/>
<path d="M1313.8,84.1 L1308.80,75.44 A10,10 0 0 1 1318.80,75.44 Z" fill="#f9c03c"/><path d="M1313.8,84.1 L1318.80,75.44 A10,10 0 0 1 1323.80,84.10 Z" fill="#f68b3a"/><path d="M1313.8,84.1 L1323.80,84.10 A10,10 0 0 1 1318.80,92.76 Z" fill="#e8524f"/><path d="M1313.8,84.1 L1318.80,92.76 A10,10 0 0 1 1308.80,92.76 Z" fill="#8a5cf0"/><path d="M1313.8,84.1 L1308.80,92.76 A10,10 0 0 1 1303.80,84.10 Z" fill="#19b5d8"/><path d="M1313.8,84.1 L1303.80,84.10 A10,10 0 0 1 1308.80,75.44 Z" fill="#57c96f"/>
<g fill="#d8d8d8"><rect x="1304" y="104.6" width="20" height="1"/><rect x="1304" y="107.2" width="20" height="2.6"/><rect x="1304" y="113" width="20" height="3.5"/><rect x="1304" y="119.6" width="20" height="5"/></g>
<g stroke="#c8c8c8" stroke-width="1"><path d="M1304,137 H1322" stroke-dasharray="1.5,1.8"/><path d="M1304,140.8 H1322" stroke-dasharray="3,1.2"/><path d="M1304,145 H1322"/><path d="M1304,149 H1322" stroke-dasharray="3.5,1.5"/><path d="M1304,152.6 H1322" stroke-dasharray="5,1,2,1"/></g>
<rect x="1336.5" y="74.5" width="19" height="18.5" fill="#2b2b2b" stroke="#c4c4c4" stroke-width="1.5"/>
<path d="M1335.8,113.8 H1416 M1335.8,146.4 H1416" stroke="#e8e8e8" stroke-width="1"/>
<path d="M1485.25,81.40 H1495.75 L1490.50,86.60 Z" fill="#e0e0e0"/>
<path d="M1485.25,112.40 H1495.75 L1490.50,117.60 Z" fill="#e0e0e0"/>
<path d="M1485.25,143.80 H1495.75 L1490.50,149.00 Z" fill="#e0e0e0"/>
<path d="M1386.95,174.80 H1396.45 L1391.70,180.20 Z" fill="#d8d8d8"/>
<path d="M1488.5,173 L1494.5,179 M1494.5,174.5 V179 H1490" fill="none" stroke="#d0d0d0" stroke-width="1"/>
<path d="M1511,78.5 H1508.9 V111.7 H1511 M1534,94 H1536 V111.7 H1534" fill="none" stroke="#e0e0e0" stroke-width="1.4"/><rect x="1516.2" y="83.2" width="12.8" height="9.4" fill="#4b6a8e" stroke="#5cbaf2" stroke-width="1"/><circle cx="1522.4" cy="102.5" r="6.4" fill="#6b7280" stroke="#c8c8c8" stroke-width="1"/><polygon points="1537.00,72.20 1538.16,77.85 1542.00,73.54 1540.18,79.02 1545.66,77.20 1541.35,81.04 1547.00,82.20 1541.35,83.36 1545.66,87.20 1540.18,85.38 1542.00,90.86 1538.16,86.55 1537.00,92.20 1535.84,86.55 1532.00,90.86 1533.82,85.38 1528.34,87.20 1532.65,83.36 1527.00,82.20 1532.65,81.04 1528.34,77.20 1533.82,79.02 1532.00,73.54 1535.84,77.85" fill="#f8cd6c"/>
<path d="M1569,74 H1572.5 V93.5 H1569" fill="none" stroke="#e0e0e0" stroke-width="1.1"/><rect x="1559.3" y="75.5" width="7.5" height="6" fill="#4b6a8e" stroke="#5cbaf2" stroke-width="0.9"/><circle cx="1563" cy="87.7" r="3.6" fill="#6b7280" stroke="#c8c8c8" stroke-width="0.9"/><path d="M1569.5,81.5 L1575.5,87.5 M1575.5,81.5 L1569.5,87.5" stroke="#ee4b4b" stroke-width="1.6"/>
<path d="M1559.5,105 H1557.2 V122 H1559.5 M1567,105 H1569.3 V122 H1567" fill="none" stroke="#d0d0d0" stroke-width="1"/><rect x="1560" y="107.3" width="5.5" height="4.5" fill="#4b6a8e" stroke="#5cbaf2" stroke-width="0.9"/><circle cx="1563" cy="116.8" r="2.8" fill="#6b7280" stroke="#c8c8c8" stroke-width="0.9"/><path d="M1567.5,124.5 L1573,118.5 L1575.5,121 L1570,127 L1567,127.5 Z" fill="#f8cd6c"/><path d="M1572.5,119 L1574,117.5 L1576.5,120 L1575,121.5 Z" fill="#e85a5a"/>
<path d="M1560.5,136 H1558.5 V153.5 H1560.5 M1568,136 H1570 V145" fill="none" stroke="#b8b8b8" stroke-width="1"/><rect x="1562" y="139" width="6" height="4.5" fill="none" stroke="#5ccf6a" stroke-width="1.1"/><circle cx="1565" cy="148.5" r="2.8" fill="none" stroke="#5ccf6a" stroke-width="1.1"/><path d="M1569,145 L1569,155.5 L1571.5,153.2 L1573.5,157.5 L1575,156.8 L1573,152.5 L1576.3,152.3 Z" fill="#f4f4f4"/>
<path d="M1565.35,174.80 H1574.85 L1570.10,180.20 Z" fill="#d8d8d8"/>
<rect x="1613.2" y="87.9" width="35.5" height="7.8" fill="#f8cd6c"/><g stroke="#3b4453" stroke-width="0.8"><path d="M1616.5,87.9 V90.5 M1619.8,87.9 V91.8 M1623.1,87.9 V90.5 M1626.4,87.9 V91.8 M1629.7,87.9 V90.5 M1633,87.9 V91.8 M1636.3,87.9 V90.5 M1639.6,87.9 V91.8 M1642.9,87.9 V90.5 M1646.2,87.9 V91.8"/></g>
<path d="M1628.00,140.70 H1634.40 L1631.20,144.50 Z" fill="#d8d8d8"/>
<path d="M1678,80 L1678,92.5 L1681,90 L1683.3,94.5 L1685,93.7 L1682.8,89.3 L1686.5,89 Z" fill="#f4f4f4"/><path d="M1685,74 L1681.5,79.5 H1684.5 L1682.5,84 L1689,77.5 H1686 L1688.5,74 Z" fill="#f8cd6c"/><rect x="1685.2" y="82" width="12.8" height="11.5" fill="#f0f0f0"/><g fill="#3d8fd8"><rect x="1687.3" y="84" width="1.3" height="1.3"/><rect x="1687.3" y="87" width="1.3" height="1.3"/><rect x="1687.3" y="90" width="1.3" height="1.3"/><rect x="1689.6" y="84.2" width="6.5" height="0.9"/><rect x="1689.6" y="87.2" width="6.5" height="0.9"/><rect x="1689.6" y="90.2" width="6.5" height="0.9"/></g>
<rect x="1678.3" y="105.3" width="17.8" height="17.5" fill="none" stroke="#48c462" stroke-width="1" stroke-dasharray="2,1.2"/><path d="M1680.5,112 H1684 V106.8 H1694.5 V117 H1689.5 V121 H1680.5 Z" fill="#60c97a"/><path d="M1684,117 H1689.5" stroke="#3b4453" stroke-width="0.8"/><path d="M1690,115 L1690,126.5 L1692.6,124 L1694.8,128.2 L1696.3,127.5 L1694.2,123.3 L1697.6,123 Z" fill="#f4f4f4"/>
<rect x="1680.3" y="136.1" width="14.3" height="19.6" fill="#d4d4d4"/><rect x="1682" y="138" width="11" height="3.6" fill="#555"/><g fill="#555"><rect x="1682.2" y="143.8" width="2.6" height="2"/><rect x="1686.2" y="143.8" width="2.6" height="2"/><rect x="1690.2" y="143.8" width="2.6" height="2"/><rect x="1682.2" y="147.6" width="2.6" height="2"/><rect x="1686.2" y="147.6" width="2.6" height="2"/><rect x="1690.2" y="147.6" width="2.6" height="2"/><rect x="1682.2" y="151.4" width="2.6" height="2"/><rect x="1686.2" y="151.4" width="2.6" height="2"/><rect x="1690.2" y="151.4" width="2.6" height="2"/></g>
<path d="M1671.05,174.60 H1680.55 L1675.80,180.00 Z" fill="#d8d8d8"/>
<rect x="1724.5" y="76.5" width="27.5" height="31.5" fill="#d9a868"/><rect x="1731" y="74.5" width="14.5" height="4.5" rx="1" fill="#f0f0f0"/><path d="M1734,74.5 A4.5,3 0 0 1 1742,74.5 Z" fill="#f0f0f0"/><path d="M1734,85.5 H1749.5 L1757.2,93 V113 H1734 Z" fill="#d6d6d6"/><path d="M1749.5,85.5 V93 H1757.2 Z" fill="#f4f4f4"/>
<path d="M1737.90,141.90 H1744.30 L1741.10,145.70 Z" fill="#d8d8d8"/>
<path d="M1777.4,74 H1791.5 V89 H1784 L1777.4,91 Z" fill="#cdcdcd"/><path d="M1780,77.5 H1789 M1780,80.5 H1789 M1780,83.5 H1786" stroke="#888" stroke-width="0.8"/><path d="M1786,80 L1794,90 M1797,80 L1789,90" stroke="#f4f4f4" stroke-width="1.3"/><circle cx="1788.5" cy="91.6" r="2.2" fill="none" stroke="#f4f4f4" stroke-width="1.1"/><circle cx="1794.5" cy="91.6" r="2.2" fill="none" stroke="#f4f4f4" stroke-width="1.1"/>
<path d="M1803.80,82.90 H1810.20 L1807.00,86.70 Z" fill="#d8d8d8"/>
<path d="M1779,104.8 H1787.5 L1790,107 V121 H1779 Z" fill="#bdbdbd"/><path d="M1782.5,108 H1791 L1795,112 V125 H1782.5 Z" fill="#d6d6d6" stroke="#3b4453" stroke-width="0.8"/><path d="M1791,108 V112 H1795 Z" fill="#f0f0f0"/>
<path d="M1803.80,114.10 H1810.20 L1807.00,117.90 Z" fill="#d8d8d8"/>
<path d="M1839.8,76.7 H1857.3 V89 H1880.2 V107.1 H1839.8 Z" fill="#d6d6d6"/>
<path d="M1857.20,140.10 H1863.60 L1860.40,143.90 Z" fill="#d8d8d8"/>
<path d="M1867.15,174.60 H1876.65 L1871.90,180.00 Z" fill="#d8d8d8"/>
<path d="M1886.7,173.4 L1892.9,179.2 M1892.9,174.5 V179.2 H1888.2" fill="none" stroke="#d0d0d0" stroke-width="1"/>
<path d="M17,216 L26,196.7 M321,216 L329.4,196.7" stroke="#5a6270" stroke-width="1"/>
<path d="M256.3,201.3 L265.7,210.7 M265.7,201.3 L256.3,210.7" stroke="#a9adb4" stroke-width="1.8"/>
<path d="M299.9,198.8 V213.8 M292.4,206.3 H307.4" stroke="#e8e8e8" stroke-width="2"/>
<path d="M17.5,1004.8 L25.5,985 M189.5,1004.8 L197,985" stroke="#5a6270" stroke-width="1"/>
<path d="M168,987.8 V1002.7 M160.5,995.3 H175.5" stroke="#e8e8e8" stroke-width="2"/>
<path d="M1028.8,55 H1034.2 L1031.5,51.8 Z" fill="#707070"/>
<path d="M1045.60,50.70 H1052.00 L1048.80,54.30 Z" fill="#d8d8d8"/>
<rect x="1839.5" y="244.5" width="12" height="4.6" fill="#f0f0f0" stroke="#3a3a3a" stroke-width="1.2"/>
<rect x="1865.5" y="238" width="10.5" height="9.5" fill="#f0f0f0" stroke="#3a3a3a" stroke-width="1"/><rect x="1862.5" y="241" width="10.5" height="9.5" fill="#f0f0f0" stroke="#3a3a3a" stroke-width="1"/><rect x="1865" y="243.5" width="5.5" height="4.5" fill="#4a4a4a"/>
<path d="M1888.5,239.8 L1898.8,249 M1898.8,239.8 L1888.5,249" stroke="#3a3a3a" stroke-width="4.6"/><path d="M1888.5,239.8 L1898.8,249 M1898.8,239.8 L1888.5,249" stroke="#f2f2f2" stroke-width="2.6"/>
<circle cx="1902" cy="264" r="3.6" fill="#a9a9a9" stroke="#8c8c8c" stroke-width="1"/><path d="M1900.2,262.2 L1903.8,265.8 M1903.8,262.2 L1900.2,265.8" stroke="#bcbcbc" stroke-width="0.9"/>
<path d="M1871,270.5 H1906.5 M1871,314.8 H1906.5" stroke="#8e8e8e" stroke-width="0.8"/>
<path d="M1886,304.5 C1878,304.5 1874.1,299 1874.1,292.5 C1874.1,285.5 1879,281 1886,281 H1892 C1895,281 1896.5,283 1896.5,286 V296" fill="#a6a6a6" stroke="#878787" stroke-width="1.2"/><circle cx="1885.2" cy="292.7" r="4.8" fill="#a6a6a6" stroke="#878787" stroke-width="1.2"/><path d="M1882,296.5 L1878.5,300.5" stroke="#878787" stroke-width="1.2"/>
<text x="1888.5" y="308.9" font-family="Liberation Sans" font-weight="bold" font-size="12" fill="#8aa0bd" textLength="15" lengthAdjust="spacingAndGlyphs">2D</text>
<path d="M1883,348.5 C1879,344 1874,337 1874.3,334.5 C1874.8,332 1878,332.5 1880,335 L1882,337.5 V324.5 C1882,322 1885.5,322 1885.5,324.5 V321.5 C1885.5,319.5 1889.3,319.5 1889.3,321.5 V322.3 C1889.3,320.3 1893,320.3 1893,322.3 V325.5 C1893,323.5 1896.7,323.5 1896.7,325.5 V338 C1896.7,343 1894,347 1891.5,348.5 Z" fill="#a6a6a6" stroke="#878787" stroke-width="1.2"/><path d="M1885.5,324.5 V334 M1889.3,322.3 V334 M1893,325.5 V334" stroke="#878787" stroke-width="0.9"/>
<path d="M1875,356 L1892.5,373.5 M1893,356 L1875,374" stroke="#878787" stroke-width="1.3"/><path d="M1873.8,354.9 L1879.8,356 L1875,360.8 Z M1894,354.9 L1888,356 L1892.8,360.8 Z M1873.8,375.2 L1875,369.2 L1879.8,374 Z" fill="#878787"/><circle cx="1894.2" cy="375" r="5.8" fill="#a9a9a9" stroke="#878787" stroke-width="1.4"/><path d="M1898.6,379.4 L1903.2,383.2" stroke="#878787" stroke-width="2.4" stroke-linecap="round"/>
<path d="M1886.6,391.3 H1892.4 L1889.5,394.6 Z" fill="#8a8a8a"/>
<circle cx="1902" cy="410.1" r="3.6" fill="#a9a9a9" stroke="#8c8c8c" stroke-width="1"/><path d="M1899.6,410.1 H1904.4" stroke="#bcbcbc" stroke-width="1"/>
<path d="M1360.5,666 V711.5 M1360.5,717.5 V763 M1312,714.5 H1357.5 M1363.5,714.5 H1409" stroke="#000" stroke-width="1.2"/><rect x="1357.5" y="711.5" width="6" height="6" fill="none" stroke="#000" stroke-width="1.1"/>
<path d="M19.3,852 V960.5 H81.7 Z" fill="none" stroke="#1a4cff" stroke-width="1.1"/><path d="M19.3,951 H28.6 V960.5" fill="none" stroke="#1a4cff" stroke-width="1.1"/><path d="M21,881 L28.4,888.5 L35.5,881 M28.4,888.5 V895.8" fill="none" stroke="#1a4cff" stroke-width="1.1"/><path d="M56,944 L71,958.5 M71,944 L56,958.5" stroke="#1a4cff" stroke-width="1.1"/>
<rect x="382" y="824" width="2" height="2" fill="#e6e6e6"/><rect x="382" y="828" width="2" height="2" fill="#e6e6e6"/><rect x="386" y="824" width="2" height="2" fill="#e6e6e6"/><rect x="386" y="828" width="2" height="2" fill="#e6e6e6"/><rect x="390" y="824" width="2" height="2" fill="#e6e6e6"/><rect x="390" y="828" width="2" height="2" fill="#e6e6e6"/><rect x="394" y="824" width="2" height="2" fill="#e6e6e6"/><rect x="394" y="828" width="2" height="2" fill="#e6e6e6"/><rect x="398" y="824" width="2" height="2" fill="#e6e6e6"/><rect x="398" y="828" width="2" height="2" fill="#e6e6e6"/><rect x="402" y="824" width="2" height="2" fill="#e6e6e6"/><rect x="402" y="828" width="2" height="2" fill="#e6e6e6"/>
<path d="M384.5,839.5 L395.5,850.5 M395.5,839.5 L384.5,850.5" stroke="#d8d8d8" stroke-width="2"/>
<path d="M383,883.5 L392.5,874" stroke="#cfcfcf" stroke-width="3.4" stroke-linecap="round"/><path d="M390,876.5 C387.5,872.5 390,866 396.5,866.5 L393.5,870 L395.5,872.5 L399.5,869.5 C400.5,875 395,879 390,876.5 Z" fill="#cfcfcf"/>
<rect x="413" y="953.5" width="19.5" height="14.5" fill="#f4f4f4" stroke="#6a6a6a" stroke-width="1"/><rect x="413" y="953.5" width="19.5" height="3" fill="#6a6a6a"/><path d="M415.5,960 L418,962 L415.5,964 M419,965 H423" fill="none" stroke="#6a6a6a" stroke-width="0.9"/>
<path d="M435.75,959.00 H444.25 L440.00,964.00 Z" fill="#5a5a5a"/>
<path d="M1337.5,987 V1006.6 H1357" fill="none" stroke="#e6e6e6" stroke-width="1.1"/><path d="M1337.5,1000.8 H1343.5 V1006.6" fill="none" stroke="#e6e6e6" stroke-width="1"/>
<circle cx="1374.9" cy="997.3" r="7.7" fill="none" stroke="#e6e6e6" stroke-width="1.1"/><path d="M1374.9,997.3 H1387.3 M1374.9,997.3 L1384,988.5" stroke="#e6e6e6" stroke-width="1.1"/>
<path d="M1396.80,993.90 H1406.80 L1401.80,998.50 Z" fill="#d8d8d8"/>
<path d="M1419,988 L1434.5,1003.8" stroke="#d9534f" stroke-width="1.1"/><path d="M1427.4,987 V1005.2" stroke="#4cd964" stroke-width="1.1"/><rect x="1425.9" y="994.5" width="3.4" height="3.4" fill="#3b4453" stroke="#e6e6e6" stroke-width="0.9"/>
<path d="M1447.00,993.90 H1457.00 L1452.00,998.50 Z" fill="#d8d8d8"/>
<path d="M1468,1004 L1482.5,989" stroke="#e6e6e6" stroke-width="1.1"/><path d="M1468,1004.3 H1488" stroke="#cfd9e6" stroke-width="1.8"/><rect x="1473.6" y="995" width="3.8" height="3.8" fill="#e6e6e6"/>
<rect x="1500.7" y="989.5" width="17" height="17" fill="none" stroke="#e6e6e6" stroke-width="1.2"/><rect x="1498.5" y="987.2" width="5.5" height="5.5" fill="#5b8ec9" stroke="#e6e6e6" stroke-width="1.1"/>
<path d="M1528.00,993.90 H1538.00 L1533.00,998.50 Z" fill="#d8d8d8"/>
<rect x="1551.5" y="987.8" width="19.3" height="18.5" fill="none" stroke="#e6e6e6" stroke-width="1.1" stroke-dasharray="2.5,1.8"/><rect x="1560" y="995.6" width="8" height="8" fill="none" stroke="#e6e6e6" stroke-width="1.1"/><path d="M1553,989 L1558.5,994.5" stroke="#e6e6e6" stroke-width="1.1"/><path d="M1552,988 L1556,988.6 L1552.6,992 Z" fill="#e6e6e6"/>
<path d="M1589.6000000000001,987.5 L1592.4,998.0 L1598.3000000000002,1006.5 L1589.6000000000001,1002.0 L1580.9,1006.5 L1586.8000000000002,998.0 Z" fill="#d6d6d6"/><circle cx="1597.2" cy="991.6" r="3.2" fill="none" stroke="#d6d6d6" stroke-width="1"/>
<path d="M1619.9,987.5 L1622.7,998.0 L1628.6000000000001,1006.5 L1619.9,1002.0 L1611.2,1006.5 L1617.1000000000001,998.0 Z" fill="#d6d6d6"/><path d="M1627.5,987 L1624,992 H1626.5 L1624.5,996 L1629,990.5 H1626.5 L1628.8,987 Z" fill="#d6d6d6"/>
<rect x="1651.80" y="986.80" width="4" height="4" fill="#d6d6d6" transform="rotate(0 1653.8 996.8)"/><rect x="1651.80" y="986.80" width="4" height="4" fill="#d6d6d6" transform="rotate(45 1653.8 996.8)"/><rect x="1651.80" y="986.80" width="4" height="4" fill="#d6d6d6" transform="rotate(90 1653.8 996.8)"/><rect x="1651.80" y="986.80" width="4" height="4" fill="#d6d6d6" transform="rotate(135 1653.8 996.8)"/><rect x="1651.80" y="986.80" width="4" height="4" fill="#d6d6d6" transform="rotate(180 1653.8 996.8)"/><rect x="1651.80" y="986.80" width="4" height="4" fill="#d6d6d6" transform="rotate(225 1653.8 996.8)"/><rect x="1651.80" y="986.80" width="4" height="4" fill="#d6d6d6" transform="rotate(270 1653.8 996.8)"/><rect x="1651.80" y="986.80" width="4" height="4" fill="#d6d6d6" transform="rotate(315 1653.8 996.8)"/><circle cx="1653.8" cy="996.8" r="7.6" fill="#d6d6d6"/><circle cx="1653.8" cy="996.8" r="3" fill="#3b4453"/>
<path d="M1674.00,993.90 H1684.00 L1679.00,998.50 Z" fill="#d8d8d8"/>
<path d="M1704.5,987.2 V1006.2 M1695,996.7 H1714" stroke="#e6e6e6" stroke-width="2.2"/>
<rect x="1728.3" y="987.6" width="7.5" height="7.2" fill="none" stroke="#d6d6d6" stroke-width="1"/><circle cx="1742.4" cy="995.4" r="4.2" fill="none" stroke="#d6d6d6" stroke-width="1"/><path d="M1731,1006.3 L1735.7,999 L1740.6,1006.3 Z" fill="none" stroke="#d6d6d6" stroke-width="1"/>
<path d="M1760,988.5 L1764.5,984.2 H1780.5 V1001.5 L1776,1005.8 H1760 Z" fill="#3a78c9"/><path d="M1764.5,984.2 H1780.5 L1776,988.5 H1760 Z" fill="#6a9fdc"/><path d="M1776,988.5 L1780.5,984.2 V1001.5 L1776,1005.8 Z" fill="#2f63a8"/><path d="M1760,998.5 H1776 V1005.8 H1760 Z" fill="#f1b92f"/><path d="M1765.5,984.5 V998 M1760,990 H1771" stroke="#f4f4f4" stroke-width="1.1"/><circle cx="1765.5" cy="990" r="1.5" fill="none" stroke="#f4f4f4" stroke-width="1"/><path d="M1770,1002.5 L1774.3,1007 L1784.3,997.3" fill="none" stroke="#3a4453" stroke-width="4"/><path d="M1770,1002.5 L1774.3,1007 L1784.3,997.3" fill="none" stroke="#3fb34f" stroke-width="2.4"/>
<path d="M1794.3,995 H1801 L1803.5,997.5 V1006.5 H1794.3 Z" fill="#3a78c9" stroke="#f0f0f0" stroke-width="0.8"/><path d="M1794.5,1002 C1797,1000 1800,1002 1803.3,1001 V1006.3 H1794.5 Z" fill="#f1b92f"/><path d="M1796,996.5 V1000" stroke="#f0f0f0" stroke-width="0.8"/><path d="M1798,993 A9,9 0 1 1 1812,1001" fill="none" stroke="#e6e6e6" stroke-width="1.1"/><path d="M1796,990.5 L1796.8,995 L1800.6,993 Z" fill="#e6e6e6"/><path d="M1806.5,988 V996 H1810" fill="none" stroke="#e6e6e6" stroke-width="1"/><circle cx="1809.4" cy="1002.6" r="4.4" fill="#5aa9e6"/><path d="M1809.4,1001.5 V1005" stroke="#fff" stroke-width="1.2"/><circle cx="1809.4" cy="999.6" r="0.7" fill="#fff"/>
<path d="M1826,987 H1838 V1006.3 H1826 Z" fill="#d9d9d9"/><path d="M1823.2,1003.5 H1838 V1006.7 H1823.2 Z" fill="#d9d9d9" stroke="#3b4453" stroke-width="0.6"/><path d="M1832,990 L1828.5,997 H1831.5 L1829.5,1002.5 L1835,995 H1832 L1834.5,990 Z" fill="#f5931f"/><circle cx="1841.6" cy="988" r="1.2" fill="#d9d9d9"/>
<rect x="1856.6" y="989.6" width="19" height="13.6" fill="none" stroke="#d6d6d6" stroke-width="1.1"/><path d="M1872.5,991.5 L1868.5,995.5 M1858.5,1001.5 L1862.5,997.5" stroke="#d6d6d6" stroke-width="1.1"/><path d="M1873.5,990.5 H1869.5 L1873.5,994.5 Z M1857.5,1002.3 H1861.5 L1857.5,998.3 Z" fill="#d6d6d6"/>
<g fill="#e6e6e6"><rect x="1886" y="987.8" width="20" height="2.3"/><rect x="1886" y="995.3" width="20" height="2.3"/><rect x="1886" y="1002.8" width="20" height="2.3"/></g></svg>
</body></html>
